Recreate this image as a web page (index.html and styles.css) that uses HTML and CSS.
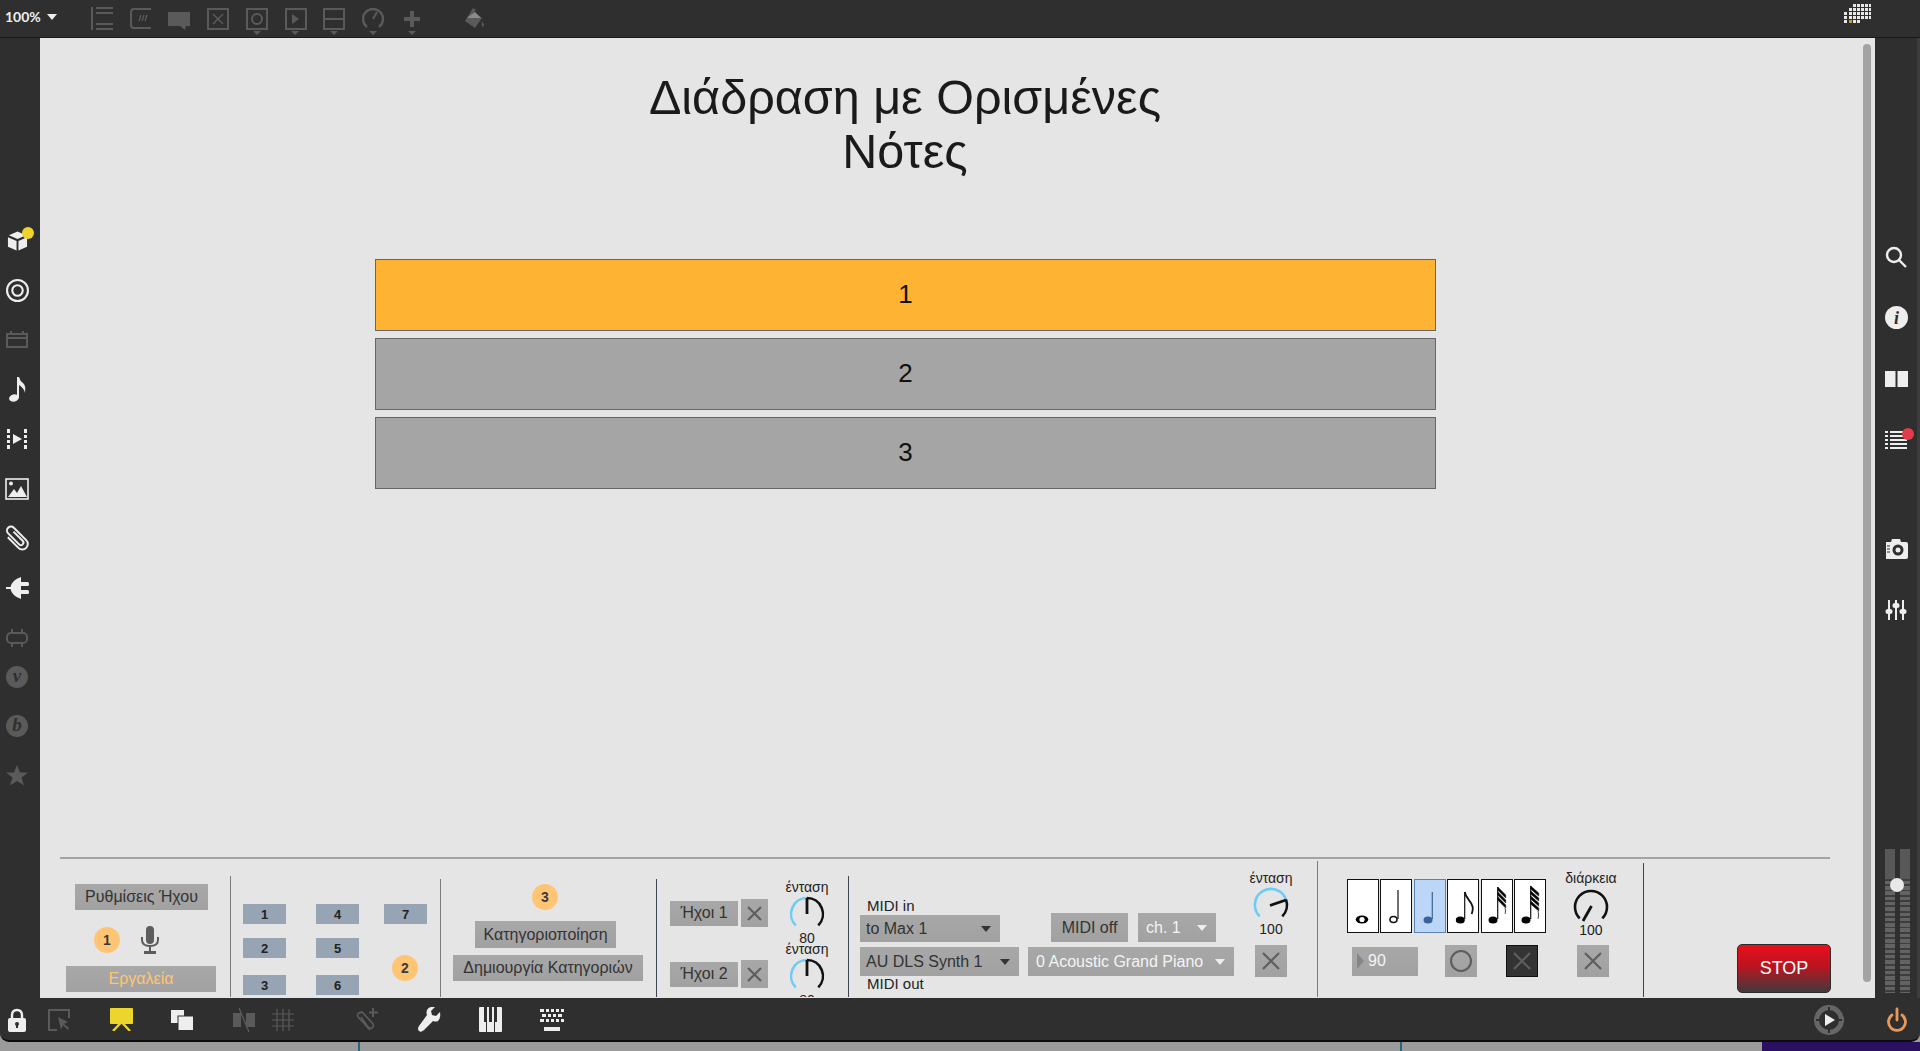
FILE: index.html
```html
<!DOCTYPE html>
<html>
<head>
    <title>Διάδραση με Ορισμένες Νότες</title>
    <link rel="stylesheet" href="styles.css">
</head>
<body>
<div class="window">
    <!-- top toolbar -->
    <div class="topbar">
        <div class="zoom-level">100% <span class="tri-white"></span></div>
        <div class="tool"><svg width="22" height="23" viewBox="0 0 22 23" fill="none" stroke="#5a5a5a" stroke-width="2"><path d="M1 0v23M5 1h17M5 6h17M5 17h17M5 22h17"/></svg></div>
        <div class="tool"><svg width="22" height="23" viewBox="0 0 22 23" fill="none" stroke="#5a5a5a" stroke-width="2"><path d="M21 2H4Q1 2 1 5v13q0 3 3 3h17"/><path d="M9 14l2-6M12 14l2-6M15 14l2-6" stroke-width="1.4"/></svg></div>
        <div class="tool"><svg width="23" height="22" viewBox="0 0 23 22" fill="#5a5a5a"><path d="M0 4h22v14h-4l-1 4-5-4H0z"/></svg></div>
        <div class="tool"><svg width="22" height="22" viewBox="0 0 22 22" fill="none" stroke="#5a5a5a" stroke-width="2"><rect x="1" y="1" width="20" height="20"/><path d="M6 6l10 10M16 6L6 16" stroke-width="1.5"/></svg></div>
        <div class="tool has-menu"><svg width="22" height="22" viewBox="0 0 22 22" fill="none" stroke="#5a5a5a" stroke-width="2"><rect x="1" y="1" width="20" height="20"/><circle cx="11" cy="11" r="5"/></svg></div>
        <div class="tool has-menu"><svg width="22" height="22" viewBox="0 0 22 22" fill="none" stroke="#5a5a5a" stroke-width="2"><rect x="1" y="1" width="20" height="20"/><path d="M7 6l7 5-7 5z" fill="#5a5a5a" stroke="none"/></svg></div>
        <div class="tool has-menu"><svg width="22" height="22" viewBox="0 0 22 22" fill="none" stroke="#5a5a5a" stroke-width="2"><rect x="1" y="1" width="20" height="20"/><path d="M1 11h20"/></svg></div>
        <div class="tool has-menu"><svg width="22" height="22" viewBox="0 0 22 22" fill="none" stroke="#5a5a5a" stroke-width="2.4"><path d="M5 19A10 10 0 1 1 17 19"/><path d="M11 11l4-7" stroke-width="2"/></svg></div>
        <div class="tool has-menu"><svg width="16" height="16" viewBox="0 0 16 16" fill="#5a5a5a"><path d="M6 0h4v6h6v4h-6v6H6v-6H0V6h6z"/></svg></div>
        <div class="tool paint"><svg width="21" height="22" viewBox="0 0 21 22" fill="#5a5a5a"><path d="M9 0l3 2-2 2 8 6-7 10-10-7z"/><path d="M3 10L11 4l6 6z" fill="#8a8a8a"/><path d="M18 13q3 4 1 6-2-1-1-6z"/></svg></div>
        <div class="grid-icon">
            <svg width="28" height="23" viewBox="0 0 28 23" fill="#e8e8e8"><path d="M10 1h3v3h-3zM14 1h3v3h-3zM18 1h3v3h-3zM22 1h3v3h-3zM26 1h2v3h-2zM6 5h3v3H6zM10 5h3v3h-3zM14 5h3v3h-3zM18 5h3v3h-3zM22 5h3v3h-3zM26 5h2v3h-2zM1 9h3v3H1zM6 9h3v3H6zM10 9h3v3h-3zM14 9h3v3h-3zM18 9h3v3h-3zM22 9h3v3h-3zM26 9h2v3h-2zM1 13h3v3H1zM6 13h3v3H6zM10 13h3v3h-3zM14 13h3v3h-3zM18 13h3v3h-3zM22 13h3v3h-3zM26 13h2v3h-2zM1 17h3v3H1zM10 17h3v3h-3zM14 17h3v3h-3z"/><path d="M6 17h3v3H6z" fill="#c9a12a"/></svg>
        </div>
    </div>

    <!-- left sidebar -->
    <div class="rail rail-left">
        <div class="rail-slot dot-yellow"><svg width="21" height="22" viewBox="0 0 22 22" fill="#eee"><path d="M11 1l9 4-9 4-9-4z"/><path d="M1 7l9 4v10l-9-4z"/><path d="M21 7l-9 4v10l9-4z"/></svg></div>
        <div class="rail-slot"><svg width="23" height="23" viewBox="0 0 22 22" fill="none" stroke="#eee" stroke-width="2"><circle cx="11" cy="11" r="10"/><circle cx="11" cy="11" r="5"/></svg></div>
        <div class="rail-slot"><svg width="22" height="17" viewBox="0 0 22 17" fill="none" stroke="#5a5a5a" stroke-width="2"><rect x="1" y="3" width="20" height="13"/><path d="M1 7h20M5 0v3M17 0v3"/></svg></div>
        <div class="rail-slot"><svg width="17" height="25" viewBox="0 0 17 25" fill="#eee"><ellipse cx="5" cy="21" rx="5" ry="3.600" transform="rotate(-15 5 21)"/><path d="M8 0h2q1 4 4 6t2 10q-1-5-6-8v13H8z"/></svg></div>
        <div class="rail-slot"><svg width="22" height="22" viewBox="0 0 22 22" fill="#eee"><path d="M1 1h3v4H1zM1 7h3v3H1zM1 12h3v3H1zM1 17h3v4H1zM18 1h3v4h-3zM18 7h3v3h-3zM18 12h3v3h-3zM18 17h3v4h-3zM7 6l9 5-9 5z"/></svg></div>
        <div class="rail-slot"><svg width="24" height="22" viewBox="0 0 24 22"><rect x="1" y="1" width="22" height="20" fill="none" stroke="#eee" stroke-width="1.6"/><path d="M3 19l6-8 3 4 4-7 6 11z" fill="#eee"/><circle cx="6" cy="5.500" r="2" fill="#eee"/></svg></div>
        <div class="rail-slot"><svg width="26" height="26" viewBox="0 0 26 26" fill="none" stroke="#eee" stroke-width="2"><g transform="rotate(-45 13 13)"><path d="M15 6v13a2.500 2.500 0 0 1-5 0V3.500a4 4 0 0 1 8 0V21a5.500 5.500 0 0 1-11 0V6"/></g></svg></div>
        <div class="rail-slot"><svg width="23" height="22" viewBox="0 0 23 22" fill="#eee"><path d="M0 10h4.500Q6 3 15 0v22Q6 19 4.500 12H0z"/><rect x="14" y="5" width="9" height="4" rx="1.500"/><rect x="14" y="13" width="9" height="4" rx="1.500"/></svg></div>
        <div class="rail-slot short"><svg width="22" height="18" viewBox="0 0 22 18" fill="none" stroke="#5a5a5a" stroke-width="2"><rect x="1" y="4" width="20" height="10" rx="4"/><path d="M6 0v4M16 0v4M6 14v4M16 14v4"/></svg></div>
        <div class="rail-slot"><div class="badge-v">v</div></div>
        <div class="rail-slot"><div class="badge-v">b</div></div>
        <div class="rail-slot"><svg width="22" height="21" viewBox="0 0 22 21" fill="#5a5a5a"><path d="M11 0l3 7.500h8l-6.500 5 2.500 8L11 16l-7 4.500 2.500-8L0 7.500h8z"/></svg></div>
    </div>

    <!-- patch -->
    <div class="canvas">
        <h1 class="title">Διάδραση με Ορισμένες<br>Νότες</h1>

        <div class="rows">
            <div class="row active">1</div>
            <div class="row">2</div>
            <div class="row">3</div>
        </div>

        <div class="panel">
            <div class="sec sec-audio">
                <div class="chip audio-btn">Ρυθμίσεις Ήχου</div>
                <div class="audio-row">
                    <div class="badge">1</div>
                    <svg width="18" height="28" viewBox="0 0 18 28" fill="#5c5c5c"><rect x="5" y="0" width="8" height="18" rx="4"/><path d="M1 11v3q0 6 8 6t8-6v-3" fill="none" stroke="#5c5c5c" stroke-width="2"/><path d="M8 20h2v5H8zM3 25h12v3H3z"/></svg>
                </div>
                <div class="chip tools-btn">Εργαλεία</div>
            </div>

            <div class="sec sec-nums">
                <div class="num">1</div><div class="num">4</div><div class="num">7</div>
                <div class="num">2</div><div class="num">5</div>
                <div class="badge badge-two">2</div>
                <div class="num">3</div><div class="num">6</div>
            </div>

            <div class="sec sec-cat">
                <div class="badge badge-three">3</div>
                <div class="chip cat-one">Κατηγοριοποίηση</div>
                <div class="chip cat-two">Δημιουργία Κατηγοριών</div>
            </div>

            <div class="sec sec-sounds">
                <div class="sound-btns">
                    <div class="sound-row">
                        <div class="chip sound">Ήχοι 1</div>
                        <div class="chip x-btn x-small"><svg width="15" height="15" viewBox="0 0 15 15"><path d="M1 1l13 13M14 1L1 14"/></svg></div>
                    </div>
                    <div class="sound-row row-two">
                        <div class="chip sound">Ήχοι 2</div>
                        <div class="chip x-btn x-small"><svg width="15" height="15" viewBox="0 0 15 15"><path d="M1 1l13 13M14 1L1 14"/></svg></div>
                    </div>
                </div>
                <div class="sound-knobs">
                    <div class="knob">
                        <div class="knob-label">ένταση</div>
                        <svg class="dial" viewBox="0 0 36 36"><path class="arc-on" d="M6.700 29.300A16 16 0 0 1 18 2"/><path class="arc-off" d="M18 2A16 16 0 0 1 29.300 29.300"/><path class="needle" d="M18 18V2"/></svg>
                        <div class="knob-value">80</div>
                    </div>
                    <div class="knob">
                        <div class="knob-label">ένταση</div>
                        <svg class="dial" viewBox="0 0 36 36"><path class="arc-on" d="M6.700 29.300A16 16 0 0 1 18 2"/><path class="arc-off" d="M18 2A16 16 0 0 1 29.300 29.300"/><path class="needle" d="M18 18V2"/></svg>
                        <div class="knob-value">80</div>
                    </div>
                </div>
            </div>

            <div class="sec sec-midi">
                <div class="midi-ports">
                    <div class="midi-label">MIDI in</div>
                    <div class="chip select port-in">to Max 1<span class="tri-dark"></span></div>
                    <div class="chip select port-out">AU DLS Synth 1<span class="tri-dark"></span></div>
                    <div class="midi-label midi-out">MIDI out</div>
                </div>
                <div class="midi-synth">
                    <div class="midi-top">
                        <div class="chip midi-off">MIDI off</div>
                        <div class="chip select light channel">ch. 1<span class="tri-white"></span></div>
                    </div>
                    <div class="chip select light program">0 Acoustic Grand Piano<span class="tri-white"></span></div>
                </div>
                <div class="knob midi-knob">
                    <div class="knob-label">ένταση</div>
                    <svg class="dial" viewBox="0 0 36 36"><path class="arc-on" d="M6.700 29.300A16 16 0 1 1 33 12.500"/><path class="arc-off" d="M33 12.500A16 16 0 0 1 29.300 29.300"/><path class="needle" d="M17 18.500L33 13"/></svg>
                    <div class="knob-value">100</div>
                    <div class="chip x-btn x-wide"><svg width="18" height="18" viewBox="0 0 18 18"><path d="M1 1l16 16M17 1L1 17"/></svg></div>
                </div>
            </div>

            <div class="sec sec-notes">
                <div class="notes-top">
                    <div class="notes">
                        <div class="note"><svg viewBox="0 0 30 52"><ellipse cx="14" cy="39.500" rx="6.300" ry="4"/><ellipse cx="14" cy="39.500" rx="2.600" ry="2.600" fill="#fff"/></svg></div>
                        <div class="note"><svg viewBox="0 0 30 52"><ellipse cx="12.500" cy="39.500" rx="3.500" ry="3" fill="#fff" stroke="#111" stroke-width="1.600"/><path d="M17 39V10" stroke="#111" stroke-width="1.200"/></svg></div>
                        <div class="note selected"><svg viewBox="0 0 30 52"><ellipse cx="13" cy="40" rx="4.500" ry="3.600" fill="#3b6298"/><path d="M17.300 39V12" stroke="#3b6298" stroke-width="1.200"/></svg></div>
                        <div class="note"><svg viewBox="0 0 30 52"><ellipse cx="12.300" cy="40" rx="4.500" ry="3.600"/><path d="M16.700 39V12" stroke="#111" stroke-width="1.200"/><path d="M16.700 12c1 7 7 9 8 15q.5 3-1 7" fill="none" stroke="#111" stroke-width="1.800"/></svg></div>
                        <div class="note"><svg viewBox="0 0 30 52"><ellipse cx="11" cy="40" rx="4.500" ry="3.600"/><path d="M15.700 39V7" stroke="#111" stroke-width="1.200"/><path d="M15.700 7l8 8v3l-8-8zM15.700 12l8 8v3l-8-8zM15.700 17l8 8v3l-8-8zM23 28q1 3 0 6" stroke="#111" stroke-width=".6"/></svg></div>
                        <div class="note"><svg viewBox="0 0 30 52"><ellipse cx="11" cy="40" rx="4.500" ry="3.600"/><path d="M15.700 39V6" stroke="#111" stroke-width="1.200"/><path d="M15.700 6l8 7v3l-8-7zM15.700 11l8 7v3l-8-7zM15.700 16l8 7v3l-8-7zM15.700 21l8 7v3l-8-7zM23 31q1 3 0 8" stroke="#111" stroke-width=".6"/></svg></div>
                    </div>
                    <div class="knob duration">
                        <div class="knob-label">διάρκεια</div>
                        <svg class="dial" viewBox="0 0 36 36"><path class="arc-off" d="M6.700 29.300A16 16 0 1 1 29.300 29.300"/><path class="needle" d="M18.500 17L10 32"/></svg>
                        <div class="knob-value">100</div>
                    </div>
                </div>
                <div class="notes-bottom">
                    <div class="chip number"><span class="num-arrow"></span>90</div>
                    <div class="chip x-btn toggle-o"><svg width="22" height="22" viewBox="0 0 22 22"><circle cx="11" cy="11" r="10"/></svg></div>
                    <div class="x-btn toggle-dark"><svg width="18" height="18" viewBox="0 0 18 18"><path d="M1 1l16 16M17 1L1 17"/></svg></div>
                    <div class="chip x-btn toggle-x"><svg width="18" height="18" viewBox="0 0 18 18"><path d="M1 1l16 16M17 1L1 17"/></svg></div>
                </div>
            </div>

            <div class="sec sec-stop">
                <div class="stop">STOP</div>
            </div>
        </div>

        <div class="scrollbar"></div>
    </div>

    <!-- right sidebar -->
    <div class="rail rail-right">
        <div class="side-slot"><svg width="22" height="22" viewBox="0 0 22 22" fill="none" stroke="#eee" stroke-width="2.400"><circle cx="9" cy="9" r="7"/><path d="M14 14l7 7"/></svg></div>
        <div class="side-slot"><svg width="23" height="23" viewBox="0 0 23 23"><circle cx="11.500" cy="11.500" r="11.500" fill="#eee"/><text x="11.500" y="18" class="info-i">i</text></svg></div>
        <div class="side-slot"><svg width="23" height="16" viewBox="0 0 23 16" fill="#eee"><path d="M0 0h10.500v16H0zM12.500 0H23v16H12.500z"/></svg></div>
        <div class="side-slot dot-red"><svg width="22" height="19" viewBox="0 0 22 19" fill="#eee"><path d="M0 1h3v2H0zM5 1h17v2H5zM0 5h3v2H0zM5 5h17v2H5zM0 9h3v2H0zM5 9h17v2H5zM0 13h3v2H0zM5 13h17v2H5zM0 17h3v2H0zM5 17h17v2H5z"/></svg></div>
        <div class="side-slot camera"><svg width="23" height="20" viewBox="0 0 23 20"><path d="M1 3h5l1-3h8l1 3h5q2 0 2 2v13q0 2-2 2H1z" fill="#eee"/><circle cx="13" cy="11" r="5.500" fill="#2f2f2f"/><circle cx="13" cy="11" r="2.500" fill="#eee"/><path d="M2 7h3M2 10h3M2 13h3" stroke="#2f2f2f"/></svg></div>
        <div class="side-slot"><svg width="22" height="20" viewBox="0 0 22 20" fill="#eee"><path d="M3 0h2v20H3zM10 0h2v20h-2zM17 0h2v20h-2z"/><rect x="0.500" y="9" width="7" height="5" rx="2.500"/><rect x="7.500" y="3" width="7" height="5" rx="2.500"/><rect x="14.500" y="9" width="7" height="5" rx="2.500"/></svg></div>
        <div class="meter">
            <div class="meter-track"></div>
            <div class="meter-track"></div>
            <div class="meter-knob"></div>
        </div>
    </div>

    <!-- bottom toolbar -->
    <div class="bottombar">
        <div class="bar-tool t-lock"><svg width="18" height="24" viewBox="0 0 18 24"><path d="M4 11V7q0-5 5-5t5 5v4" fill="none" stroke="#eee" stroke-width="2.400"/><rect x="0" y="10" width="18" height="14" rx="2" fill="#eee"/><circle cx="9" cy="16" r="2" fill="#2f2f2f"/><path d="M8 16h2v4H8z" fill="#2f2f2f"/></svg></div>
        <div class="bar-tool t-select"><svg width="22" height="22" viewBox="0 0 22 22" fill="none" stroke="#5a5a5a" stroke-width="2"><path d="M9 21H1V1h20v8"/><path d="M10 8l3 13 2-5 5 5 1-2-5-4 4-2z" fill="#5a5a5a" stroke="none"/></svg></div>
        <div class="bar-tool t-present"><svg width="23" height="23" viewBox="0 0 23 23"><rect width="23" height="16" rx="1" fill="#ecd52c"/><path d="M11.500 14L3 23M11.500 14L20 23" stroke="#ecd52c" stroke-width="2.400"/></svg></div>
        <div class="bar-tool t-layers"><svg width="24" height="22" viewBox="0 0 24 22"><rect x="0.500" y="0.500" width="14" height="14" fill="#eee" stroke="#2f2f2f"/><rect x="8" y="7" width="15.500" height="14.500" fill="#eee" stroke="#2f2f2f"/></svg></div>
        <div class="bar-tool t-clip"><svg width="22" height="24" viewBox="0 0 22 24"><path d="M0 5h8v14H0zM13 5h9v14h-9z" fill="#5a5a5a"/><path d="M6 0l10 24" stroke="#5a5a5a" stroke-width="1.400"/></svg></div>
        <div class="bar-tool t-grid"><svg width="22" height="22" viewBox="0 0 22 22" fill="none" stroke="#5a5a5a" stroke-width="1.200"><path d="M5 0v22M11 0v22M17 0v22M0 5h22M0 11h22M0 17h22"/></svg></div>
        <div class="bar-tool t-add"><svg width="22" height="24" viewBox="0 0 22 24" fill="none" stroke="#5a5a5a" stroke-width="1.800"><path d="M14 22L3 10Q0 7 3 5t5 1l9 10q1 3-1 4t-4-1L5 9"/><path d="M17 0v9M13 4.500h9" stroke-width="2"/></svg></div>
        <div class="bar-tool t-wrench"><svg width="23" height="25" viewBox="0 0 23 25"><path d="M22 5l-4 4-4-1-1-4 4-4q-6-1-8 3-1 3 0 5L1 19q-2 3 0 5t5-1l9-9q3 1 5 0 3-3 2-9z" fill="#eee"/></svg></div>
        <div class="bar-tool t-piano"><svg width="23" height="25" viewBox="0 0 23 25"><rect width="23" height="25" rx="1" fill="#eee"/><path d="M5 0h3v15H5zM10 0h3v15h-3zM15 0h3v15h-3zM7 15h1v10H7zM15 15h1v10h-1z" fill="#2f2f2f"/></svg></div>
        <div class="bar-tool t-keys"><svg width="24" height="24" viewBox="0 0 24 24" fill="#eee"><path d="M0 1h4v3H0zM6 1h3v3H6zM11 1h3v3h-3zM16 1h3v3h-3zM21 1h3v3h-3zM2 6h4v3H2zM8 6h3v3H8zM13 6h3v3h-3zM18 6h4v3h-4zM0 11h4v3H0zM6 11h3v3H6zM11 11h3v3h-3zM16 11h3v3h-3zM21 11h3v3h-3zM4 19h16v4H4z"/></svg></div>
        <div class="bar-right">
            <svg width="30" height="30" viewBox="0 0 30 30"><circle cx="15" cy="15" r="12.500" fill="none" stroke="#666" stroke-width="5"/><path d="M11 9l10 6-10 6z" fill="#eee"/><path d="M2 15h4M24 15h4M15 2v4M15 24v4" stroke="#2f2f2f" stroke-width="2"/></svg>
            <svg width="20" height="25" viewBox="0 0 20 25" fill="none" stroke="#e8995a" stroke-width="2.800" stroke-linecap="round"><path d="M10 2v11"/><path d="M5 8a8.500 8.500 0 1 0 10 0"/></svg>
        </div>
    </div>

    <div class="strip"></div>
</div>
</body>
</html>
```

FILE: styles.css
```css
* {
    box-sizing: border-box;
}

html, body {
    margin: 0;
    height: 100%;
}

body {
    background-color: #9b9b9b;
    font-family: 'Liberation Sans', Arial, sans-serif;
    color: #222;
    overflow: hidden;
}

.window {
    width: 1920px;
    height: 1051px;
    display: grid;
    grid-template-columns: 40px 1835px 45px;
    grid-template-rows: 38px 960px 44px 9px;
}

/* toolbars */
.topbar {
    grid-column: 1 / 4;
    background-color: #2f2f2f;
    border-bottom: 1px solid #1a1a1a;
    display: flex;
    align-items: flex-start;
    position: relative;
}

.zoom-level {
    width: 83px;
    padding: 8px 0 0 5px;
    color: #eee;
    font: bold 14px 'Lato', sans-serif;
    display: flex;
    align-items: center;
    gap: 6px;
}

.tool {
    width: 38.7px;
    height: 27px;
    margin-top: 5px;
    display: flex;
    align-items: center;
    justify-content: center;
    position: relative;
}

.tool.paint {
    margin-left: 24px;
}

.has-menu::after {
    content: "";
    position: absolute;
    left: 15px;
    top: 26px;
    border-left: 4px solid transparent;
    border-right: 4px solid transparent;
    border-top: 4px solid #5a5a5a;
}

.grid-icon {
    margin: 3px 49px 0 auto;
}

.tri-white, .tri-dark {
    display: inline-block;
    border-left: 5px solid transparent;
    border-right: 5px solid transparent;
    border-top: 6px solid #eee;
}

.tri-dark {
    border-top-color: #333;
}

.rail {
    background-color: #2f2f2f;
}

.rail-left {
    padding-top: 178px;
}

.rail-slot {
    height: 49.6px;
    display: flex;
    align-items: center;
    justify-content: center;
    padding-right: 6px;
    position: relative;
}

.rail-slot.short {
    height: 28.4px;
    margin-top: 10.6px;
}

.badge-v {
    width: 22px;
    height: 22px;
    border-radius: 50%;
    background-color: #5a5a5a;
    color: #2f2f2f;
    font: italic bold 19px/19px 'Liberation Serif', serif;
    text-align: center;
}

.dot-yellow::after, .dot-red::after {
    content: "";
    position: absolute;
    width: 12px;
    height: 12px;
    border-radius: 50%;
}

.dot-yellow::after {
    background-color: #efd32c;
    left: 22px;
    top: 11px;
}

.rail-right {
    grid-column: 3;
    grid-row: 2;
    padding-top: 188px;
    border-right: 3px solid #3d3d3d;
    position: relative;
}

.side-slot {
    height: 61px;
    width: 42px;
    display: flex;
    align-items: center;
    justify-content: center;
    position: relative;
}

.dot-red::after {
    background-color: #e23c4c;
    left: 27px;
    top: 19px;
}

.camera {
    margin-top: 48px;
}

.info-i {
    font: italic bold 18px 'Liberation Serif', serif;
    fill: #2f2f2f;
    text-anchor: middle;
}

.meter {
    position: absolute;
    left: 10px;
    top: 811px;
    width: 25px;
    height: 144px;
    display: flex;
    justify-content: space-between;
}

.meter-track {
    width: 10px;
    background: linear-gradient(#585858 30px, transparent 30px),
        repeating-linear-gradient(#636363 0 3.5px, #3d3d3d 3.5px 5.3px);
}

.meter-knob {
    position: absolute;
    left: 5px;
    top: 29px;
    width: 14px;
    height: 14px;
    border-radius: 50%;
    background-color: #e8e8e8;
}

.bottombar {
    grid-column: 1 / 4;
    background-color: #2f2f2f;
    border-bottom: 2px solid #0c0c0c;
    border-radius: 0 0 9px 9px;
    display: flex;
    align-items: center;
    padding-top: 1px;
    position: relative;
}

.bar-tool {
    display: flex;
    align-items: center;
    justify-content: center;
    width: 30px;
}

.t-lock { margin-left: 2px; }
.t-select { margin-left: 12px; }
.t-present { margin-left: 32px; }
.t-layers { margin-left: 31px; }
.t-clip { margin-left: 32px; }
.t-grid { margin-left: 9px; }
.t-add { margin-left: 54px; }
.t-wrench { margin-left: 32px; }
.t-piano { margin-left: 31px; }
.t-keys { margin-left: 32px; }

.bar-right {
    margin-left: auto;
    display: flex;
    align-items: center;
    gap: 43px;
    padding-right: 13px;
}

.strip {
    grid-column: 1 / 4;
    background:
        linear-gradient(90deg, transparent 358px, #1d6a80 358px 360px, transparent 360px 1400px, #1d6a80 1400px 1402px, transparent 1402px 1762px, #2a1063 1762px);
}

/* patch */
.canvas {
    background-color: #e5e5e5;
    display: flex;
    flex-direction: column;
    position: relative;
    overflow: hidden;
}

.title {
    margin: 32px 0 0 0;
    width: 1730px;
    font-size: 48.5px;
    font-weight: normal;
    line-height: 54px;
    text-align: center;
    color: #1a1a1a;
}

.rows {
    margin: 81px 0 0 335px;
    width: 1061px;
    display: flex;
    flex-direction: column;
    gap: 7px;
}

.row {
    height: 72px;
    background-color: #a5a5a5;
    border: 1.5px solid #666;
    padding-bottom: 2px;
    display: flex;
    align-items: center;
    justify-content: center;
    font-size: 26px;
    color: #111;
}

.row.active {
    background-color: #ffb333;
}

.panel {
    margin-top: auto;
    margin-bottom: 1px;
    height: 140px;
    flex: none;
    display: flex;
    align-items: flex-end;
    position: relative;
}

.panel::before {
    content: "";
    position: absolute;
    left: 20px;
    top: 0;
    width: 1770px;
    height: 2px;
    background-color: #a3a3a3;
}

.sec {
    flex: none;
    overflow: hidden;
}

.chip {
    background: linear-gradient(#a8a8a8, #a1a1a1);
    font-size: 16px;
    color: #333;
    display: flex;
    align-items: center;
    justify-content: center;
}

.badge {
    width: 26px;
    height: 26px;
    border-radius: 50%;
    background-color: #ffc574;
    color: #3a3a3a;
    font-size: 14px;
    font-weight: bold;
    display: flex;
    align-items: center;
    justify-content: center;
    flex: none;
}

/* audio section */
.sec-audio {
    width: 190px;
    height: 137px;
    padding-top: 24px;
}

.audio-btn {
    width: 133px;
    height: 26px;
    margin-left: 35px;
}

.audio-row {
    height: 28px;
    margin: 16px 0 0 54px;
    display: flex;
    align-items: center;
    gap: 21px;
}

.tools-btn {
    width: 150px;
    height: 26px;
    margin: 12px 0 0 26px;
    color: #ffc56e;
}

/* numbered boxes */
.sec-nums {
    width: 210px;
    height: 121px;
    border-left: 1px solid #7c7c7c;
    padding: 28px 0 0 12px;
    display: grid;
    grid-template-columns: 73px 68px 43px;
    grid-template-rows: 34px 37px 20px;
}

.num {
    width: 43px;
    height: 20px;
    background-color: #96a4b3;
    font-size: 13px;
    font-weight: bold;
    color: #222;
    display: flex;
    align-items: center;
    justify-content: center;
}

.badge-two {
    grid-column: 3;
    grid-row: 2 / 4;
    margin: 17px 0 0 8px;
}

/* categories */
.sec-cat {
    width: 216px;
    height: 118px;
    border-left: 1px solid #7c7c7c;
    padding-top: 5px;
}

.badge-three {
    margin-left: 91px;
}

.cat-one {
    width: 141px;
    height: 27px;
    margin: 11px 0 0 34px;
}

.cat-two {
    width: 190px;
    height: 26px;
    margin: 7px 0 0 12px;
}

/* sounds */
.sec-sounds {
    width: 192px;
    height: 118px;
    border-left: 1px solid #3c4654;
    display: flex;
}

.sound-btns {
    width: 130px;
    padding: 20px 0 0 13px;
}

.sound-row {
    height: 28px;
    display: flex;
    align-items: center;
    gap: 3px;
}

.sound-row.row-two {
    margin-top: 33px;
}

.sound {
    width: 68px;
    height: 25px;
}

.x-small {
    width: 27px;
    height: 28px;
}

.x-btn svg {
    fill: none;
    stroke: #5e5e5e;
    stroke-width: 2.2;
}

.knob {
    width: 50px;
    display: flex;
    flex-direction: column;
    align-items: center;
    flex: none;
}

.knob-label {
    font-size: 14px;
    line-height: 14px;
    height: 14px;
    white-space: nowrap;
}

.dial {
    width: 36px;
    height: 36px;
    margin-top: 2px;
    display: block;
}

.dial path {
    fill: none;
    stroke-width: 2.6;
}

.arc-on { stroke: #6ecbf5; }
.arc-off { stroke: #111; }
.dial .needle { stroke: #111; stroke-width: 2.8; }

.knob-value {
    font-size: 14px;
    line-height: 13px;
    height: 13px;
}

.sound-knobs {
    margin-left: -5px;
    padding-top: 1px;
    height: 124px;
}

.sound-knobs .knob {
    margin-bottom: -3px;
}

/* midi */
.sec-midi {
    width: 469px;
    height: 121px;
    border-left: 1px solid #3c4654;
    padding-left: 11px;
    display: flex;
    overflow: visible;
}

.midi-ports {
    width: 159px;
    margin-right: 9px;
    padding-top: 20px;
}

.midi-label {
    font-size: 15px;
    line-height: 19px;
    height: 19px;
    padding-left: 7px;
}

.midi-out {
    line-height: 16px;
}

.select {
    justify-content: space-between;
    padding: 0 9px 0 6px;
    white-space: nowrap;
}

.select.light {
    color: #f4f4f4;
    padding-left: 8px;
}

.port-in {
    width: 140px;
    height: 27px;
}

.port-out {
    width: 159px;
    height: 29px;
    margin-top: 5px;
}

.midi-synth {
    width: 206px;
    padding-top: 37px;
}

.midi-top {
    display: flex;
    gap: 10px;
    margin-left: 23px;
}

.midi-off {
    width: 77px;
    height: 29px;
}

.channel {
    width: 78px;
    height: 29px;
}

.program {
    width: 206px;
    height: 29px;
    margin-top: 5px;
}

.midi-knob {
    margin: -5px 0 0 12px;
}

.x-wide {
    width: 32px;
    height: 32px;
    margin-top: 9px;
}

/* durations */
.sec-notes {
    width: 326px;
    height: 136px;
    border-left: 1px solid #7c7c7c;
    padding-left: 29px;
}

.notes-top {
    display: flex;
}

.notes {
    display: flex;
    gap: 1.4px;
    margin-top: 18px;
}

.note {
    width: 32px;
    height: 54px;
    background-color: #fff;
    border: 1px solid #111;
}

.note svg {
    display: block;
    width: 30px;
    height: 52px;
}

.note.selected {
    background-color: #bcd6f7;
    border-color: #5c82b0;
}

.duration {
    margin: 10px 0 0 20px;
}

.duration .dial {
    margin-top: 4px;
}

.duration .knob-value {
    margin-top: -1px;
}

.notes-bottom {
    margin-top: 8px;
    display: flex;
    align-items: center;
}

.number {
    width: 66px;
    height: 29px;
    margin-left: 5px;
    padding-left: 5px;
    justify-content: flex-start;
    color: #f4f4f4;
    font-size: 16px;
    gap: 4px;
}

.num-arrow {
    flex: none;
    border-top: 8px solid transparent;
    border-bottom: 8px solid transparent;
    border-left: 7px solid #868686;
}

.toggle-o, .toggle-x, .toggle-dark {
    width: 32px;
    height: 32px;
    display: flex;
    align-items: center;
    justify-content: center;
}

.toggle-o {
    margin-left: 27px;
}

.toggle-dark {
    margin-left: 29px;
    background-color: #333;
    border: 1px solid #111;
}

.toggle-x {
    margin-left: 39px;
}

.sec-stop {
    width: 232px;
    height: 134px;
    border-left: 1px solid #3c4654;
    padding: 81px 0 0 93px;
}

.stop {
    width: 94px;
    height: 49px;
    border-radius: 5px;
    border: 1px solid #2c2c2c;
    background: linear-gradient(#ea0f1b, #bb1420 45%, #423a3c);
    color: #fff;
    font-size: 18px;
    display: flex;
    align-items: center;
    justify-content: center;
}

.scrollbar {
    position: absolute;
    left: 1823px;
    top: 6px;
    width: 8px;
    height: 938px;
    border-radius: 4px;
    background-color: #a3a3a3;
}
```
